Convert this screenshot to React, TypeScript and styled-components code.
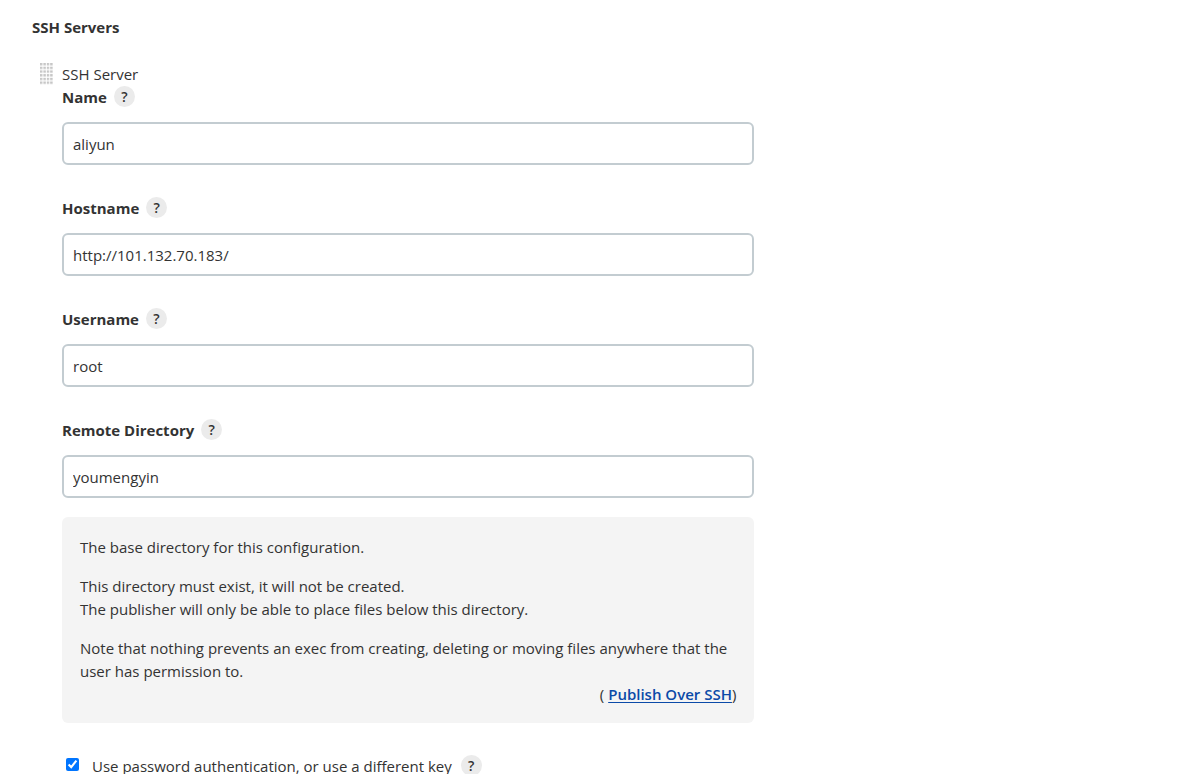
import React from "react";
import styled, { createGlobalStyle } from "styled-components";

const GlobalStyle = createGlobalStyle`
  *, *::before, *::after { box-sizing: border-box; }
  body {
    margin: 0;
    background: #fff;
    color: #333;
    font: 400 15px/23px "Segoe UI", "Open Sans", "Noto Sans", sans-serif;
  }
`;

const Page = styled.main`
  height: calc(100vh - 6px);
  overflow: hidden;
  padding: 16px 32px 0;
`;

const SectionTitle = styled.h2`
  margin: 0 0 24px;
  font-size: 15px;
  line-height: 23px;
  font-weight: 700;
`;

const Server = styled.section`
  display: flex;
  gap: 8px;
  width: 64.5%;
  min-width: 320px;
  padding-left: 8px;
`;

const Handle = styled.svg`
  flex: none;
  width: 14px;
  height: 23px;
`;

const Fields = styled.div`
  flex: 1;
  min-width: 0;
`;

const Field = styled.div<{ $last?: boolean }>`
  margin-bottom: ${(p) => (p.$last ? 19 : 32)}px;
`;

const LabelRow = styled.div`
  display: flex;
  align-items: flex-start;
  gap: 7px;
  height: 23px;
  margin-bottom: 13px;
`;

const Label = styled.label<{ $plain?: boolean }>`
  font-weight: ${(p) => (p.$plain ? 500 : 700)};
`;

const HelpButton = styled.button`
  flex: none;
  width: 21px;
  height: 21px;
  padding: 0;
  border: 0;
  border-radius: 50%;
  background: #ebebeb;
  color: #333;
  font: inherit;
  font-size: 14px;
  font-weight: 600;
  line-height: 21px;
  text-align: center;
`;

const TextInput = styled.input`
  display: block;
  width: 100%;
  height: 43px;
  padding: 0 9px;
  border: 2px solid #c3ccd1;
  border-radius: 6px;
  background: #fff;
  color: #333;
  font: inherit;
`;

const HelpPanel = styled.div`
  margin-bottom: 32px;
  padding: 19px 18px 17px;
  border-radius: 6px;
  background: #f4f4f4;
`;

const Paragraph = styled.p`
  margin: 0 0 16px;
  &:last-of-type { margin: 0; }
`;

const Source = styled.div`
  text-align: right;
`;

const SourceLink = styled.a`
  color: #0b4aa8;
  font-weight: 600;
  text-underline-offset: 2px;
`;

const CheckRow = styled.div`
  display: flex;
  align-items: flex-start;
  gap: 9px;
`;

const Checkbox = styled.input`
  width: 13px;
  height: 13px;
  margin: 3px 4px;
  accent-color: #0075ff;
`;

const fields = [
  { id: "name", label: "Name", value: "aliyun" },
  { id: "hostname", label: "Hostname", value: "http://101.132.70.183/" },
  { id: "username", label: "Username", value: "root" },
  { id: "remote", label: "Remote Directory", value: "youmengyin" },
];

export default function App() {
  return (
    <>
      <GlobalStyle />
      <Page>
        <SectionTitle>SSH Servers</SectionTitle>
        <Server>
          <Handle viewBox="0 0 14 23" aria-hidden="true">
            <defs>
              <pattern id="dots" width="3.4" height="3.7" patternUnits="userSpaceOnUse">
                <rect width="2.4" height="2.4" fill="#c6c6c6" />
              </pattern>
            </defs>
            <rect width="13" height="22" fill="url(#dots)" />
          </Handle>
          <Fields>
            <div>SSH Server</div>
            {fields.map((f, i) => (
              <Field key={f.id} $last={i === fields.length - 1}>
                <LabelRow>
                  <Label htmlFor={f.id}>{f.label}</Label>
                  <HelpButton type="button" aria-label={`Help for ${f.label}`}>?</HelpButton>
                </LabelRow>
                <TextInput id={f.id} type="text" defaultValue={f.value} />
              </Field>
            ))}
            <HelpPanel>
              <Paragraph>The base directory for this configuration.</Paragraph>
              <Paragraph>
                This directory must exist, it will not be created.
                <br />
                The publisher will only be able to place files below this directory.
              </Paragraph>
              <Paragraph>
                Note that nothing prevents an exec from creating, deleting or moving files anywhere that the user has permission to.
              </Paragraph>
              <Source>
                ( <SourceLink href="#publish-over-ssh">Publish Over SSH</SourceLink>)
              </Source>
            </HelpPanel>
            <CheckRow>
              <Checkbox id="password-auth" type="checkbox" defaultChecked />
              <Label htmlFor="password-auth" $plain>Use password authentication, or use a different key</Label>
              <HelpButton type="button" aria-label="Help for password authentication">?</HelpButton>
            </CheckRow>
          </Fields>
        </Server>
      </Page>
    </>
  );
}
